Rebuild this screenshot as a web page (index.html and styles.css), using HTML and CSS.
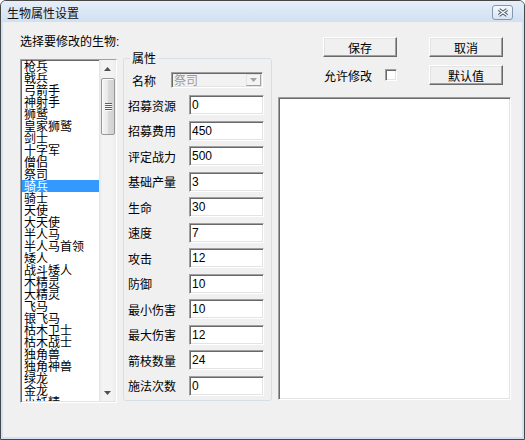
FILE: index.html
```html
<!DOCTYPE html>
<html lang="zh-CN">
<head>
<meta charset="utf-8">
<title>生物属性设置</title>
<link rel="stylesheet" href="styles.css">
</head>
<body>
<div class="window">
  <div class="titlebar">
    <span class="title">生物属性设置</span>
    <span class="close">
      <svg width="12" height="9" viewBox="0 0 12 9"><path d="M2 1.5 L10 7.5 M10 1.5 L2 7.5" stroke="#4a5568" stroke-width="3.4" fill="none"/><path d="M2 1.5 L10 7.5 M10 1.5 L2 7.5" stroke="#ffffff" stroke-width="1.3" fill="none"/></svg>
    </span>
  </div>
  <div class="client">
    <div class="col-list">
      <div class="caption">选择要修改的生物:</div>
      <div class="listbox">
        <ul class="items">
          <li>枪兵</li><li>戟兵</li><li>弓箭手</li><li>神射手</li><li>狮鹫</li><li>皇家狮鹫</li><li>剑士</li><li>十字军</li><li>僧侣</li><li>祭司</li><li class="sel">骑兵</li><li>骑士</li><li>天使</li><li>大天使</li><li>半人马</li><li>半人马首领</li><li>矮人</li><li>战斗矮人</li><li>木精灵</li><li>大精灵</li><li>飞马</li><li>银飞马</li><li>枯木卫士</li><li>枯木战士</li><li>独角兽</li><li>独角神兽</li><li>绿龙</li><li>金龙</li><li>小妖精</li>
        </ul>
        <div class="vscroll">
          <div class="sb-btn"><svg width="7" height="4" viewBox="0 0 7 4"><polygon points="3.5,0 7,4 0,4" fill="#505050"/></svg></div>
          <div class="sb-track">
            <div class="sb-thumb"><span class="grip"></span><span class="grip"></span><span class="grip"></span><span class="grip"></span></div>
          </div>
          <div class="sb-btn"><svg width="7" height="4" viewBox="0 0 7 4"><polygon points="0,0 7,0 3.5,4" fill="#505050"/></svg></div>
        </div>
      </div>
    </div>
    <fieldset class="props">
      <legend>属性</legend>
      <div class="row-name">
        <span class="lbl-name">名称</span>
        <div class="combo"><span class="combo-text">祭司</span><span class="combo-btn"><svg width="7" height="4" viewBox="0 0 7 4"><polygon points="0,0 7,0 3.5,4" fill="#a3a3a3"/></svg></span></div>
      </div>
      <div class="fields">
        <div class="row"><span class="lbl">招募资源</span><span class="edit">0</span></div>
        <div class="row"><span class="lbl">招募费用</span><span class="edit">450</span></div>
        <div class="row"><span class="lbl">评定战力</span><span class="edit">500</span></div>
        <div class="row"><span class="lbl">基础产量</span><span class="edit">3</span></div>
        <div class="row"><span class="lbl">生命</span><span class="edit">30</span></div>
        <div class="row"><span class="lbl">速度</span><span class="edit">7</span></div>
        <div class="row"><span class="lbl">攻击</span><span class="edit">12</span></div>
        <div class="row"><span class="lbl">防御</span><span class="edit">10</span></div>
        <div class="row"><span class="lbl">最小伤害</span><span class="edit">10</span></div>
        <div class="row"><span class="lbl">最大伤害</span><span class="edit">12</span></div>
        <div class="row"><span class="lbl">箭枝数量</span><span class="edit">24</span></div>
        <div class="row"><span class="lbl">施法次数</span><span class="edit">0</span></div>
      </div>
    </fieldset>
    <div class="col-right">
      <div class="btn-grid">
        <button class="btn">保存</button>
        <button class="btn">取消</button>
        <div class="allow"><span>允许修改</span><span class="check"></span></div>
        <button class="btn">默认值</button>
      </div>
      <div class="memo"></div>
    </div>
  </div>
</div>
</body>
</html>
```
FILE: styles.css
```css
* { box-sizing: border-box; }
body {
  margin: 0;
  background: #ffffff;
  font-family: "Liberation Sans", "Noto Sans CJK SC", sans-serif;
  font-size: 12px;
  color: #000;
}
.window {
  width: 525px;
  height: 440px;
  border: 1px solid #474747;
  border-radius: 6px 6px 0 0;
  background: #d2e1f3;
  padding: 0 2px 2px;
  display: flex;
  flex-direction: column;
  overflow: hidden;
}
.titlebar {
  height: 21px;
  flex: none;
  margin: 0 -2px;
  padding: 0 11px 0 6px;
  display: flex;
  align-items: flex-start;
  background: linear-gradient(#e6eef9, #d0e0f2);
}
.title {
  margin-top: 5px;
  line-height: 14px;
  color: #111;
  font-family: "Noto Sans CJK SC", sans-serif;
}
.close {
  margin-left: auto;
  margin-top: 4px;
  width: 21px;
  height: 15px;
  border: 1px solid #8796ad;
  border-radius: 3px;
  background: linear-gradient(#f5f8fc, #d9e4f1);
  display: flex;
  align-items: center;
  justify-content: center;
}
.client {
  flex: 1;
  background: #f0f0f0;
  display: flex;
  align-items: flex-start;
}
.col-list {
  width: 97px;
  margin-left: 17px;
  padding-top: 13px;
  flex: none;
}
.caption {
  line-height: 14px;
  white-space: nowrap;
}
.listbox {
  margin-top: 10px;
  height: 344px;
  border: 1px solid;
  border-color: #a0a0a0 #ffffff #ffffff #a0a0a0;
  box-shadow: inset 1px 1px 0 #696969, inset -1px -1px 0 #e3e3e3;
  background: #fff;
  display: flex;
}
.items {
  list-style: none;
  margin: 0 0 1px 1px;
  padding: 0;
  width: 77px;
  overflow: hidden;
  font-family: "Noto Sans CJK SC", sans-serif;
}
.items li {
  height: 12px;
  line-height: 12px;
  padding-left: 2px;
  white-space: nowrap;
}
.items li.sel {
  background: #3399ff;
  color: #fff;
}
.vscroll {
  width: 17px;
  flex: none;
  margin-bottom: 1px;
  display: flex;
  flex-direction: column;
  background: linear-gradient(to right, #e4e4e4 0, #f3f3f3 3px, #f3f3f3 13px, #ebebeb 17px);
}
.sb-btn {
  height: 17px;
  flex: none;
  display: flex;
  align-items: center;
  justify-content: center;
}
.sb-btn svg { display: block; }
.sb-track {
  flex: 1;
  padding-top: 1px;
}
.sb-thumb {
  height: 57px;
  margin: 0 1px 0 2px;
  border: 1px solid #979797;
  border-radius: 2px;
  background: linear-gradient(to right, #f4f4f4, #e8e8e8 50%, #dadada 51%, #d2d2d2);
  box-shadow: inset 1px 1px 0 #fbfbfb;
  display: flex;
  flex-direction: column;
  align-items: center;
  justify-content: center;
  gap: 1px;
}
.grip {
  width: 7px;
  height: 1px;
  background: #5e5e5e;
  box-shadow: 0 1px 0 #fafafa;
}
.props {
  margin: 29px 0 0 6px;
  width: 149px;
  flex: none;
  min-width: 0;
  border: 1px solid #d5dfe5;
  border-radius: 3px;
  padding: 7px 0 4px 4px;
}
.props legend {
  margin-left: 2px;
  padding: 0 2px;
  line-height: 14px;
  font-family: "Noto Sans CJK SC", sans-serif;
}
.row-name {
  display: flex;
  align-items: center;
  height: 16px;
  padding-left: 4px;
}
.lbl-name {
  width: 39px;
  font-family: "Noto Sans CJK SC", sans-serif;
}
.combo {
  width: 92px;
  height: 16px;
  border: 1px solid;
  border-color: #a0a0a0 #ffffff #ffffff #a0a0a0;
  box-shadow: inset 1px 1px 0 #696969, inset -1px -1px 0 #e3e3e3;
  background: #f2f2f2;
  display: flex;
  align-items: stretch;
  padding: 1px 1px 1px 2px;
}
.combo-text {
  flex: 1;
  color: #9a9a9a;
  line-height: 12px;
  font-family: "Noto Sans CJK SC", sans-serif;
}
.combo-btn {
  width: 15px;
  border: 1px solid;
  border-color: #e3e3e3 #a0a0a0 #a0a0a0 #e3e3e3;
  background: #f4f4f4;
  display: flex;
  align-items: center;
  justify-content: center;
}
.fields {
  margin-top: 7px;
  display: flex;
  flex-direction: column;
  gap: 5.5px;
}
.row {
  display: flex;
  align-items: center;
  height: 20px;
}
.lbl {
  width: 61px;
  font-family: "Noto Sans CJK SC", sans-serif;
}
.edit {
  width: 75px;
  height: 20px;
  border: 1px solid;
  border-color: #a0a0a0 #ffffff #ffffff #a0a0a0;
  box-shadow: inset 1px 1px 0 #696969, inset -1px -1px 0 #e3e3e3;
  background: #fff;
  padding-left: 2px;
  line-height: 18px;
  font-size: 12px;
}
.col-right {
  margin: 15px 0 0 6px;
  width: 233px;
  flex: none;
}
.btn-grid {
  display: grid;
  grid-template-columns: 74px 74px;
  grid-auto-rows: 20px;
  column-gap: 32px;
  row-gap: 8px;
  padding-left: 45px;
}
.btn {
  font-family: "Noto Sans CJK SC", sans-serif;
  font-size: 12px;
  padding: 0;
  margin: 0;
  color: #000;
  background: #f0f0f0;
  border: 1px solid;
  border-color: #ffffff #696969 #696969 #ffffff;
  box-shadow: inset -1px -1px 0 #a0a0a0, inset 1px 1px 0 #e3e3e3;
  border-radius: 0;
}
.allow {
  display: flex;
  align-items: center;
  justify-content: space-between;
  padding-left: 1px;
  font-family: "Noto Sans CJK SC", sans-serif;
}
.check {
  width: 12px;
  height: 12px;
  border: 1px solid;
  border-color: #a0a0a0 #ffffff #ffffff #a0a0a0;
  box-shadow: inset 1px 1px 0 #696969, inset -1px -1px 0 #e3e3e3;
  background: #fff;
}
.memo {
  margin-top: 12px;
  height: 303px;
  border: 1px solid;
  border-color: #a0a0a0 #ffffff #ffffff #a0a0a0;
  box-shadow: inset 1px 1px 0 #696969, inset -1px -1px 0 #e3e3e3;
  background: #fff;
}
```
